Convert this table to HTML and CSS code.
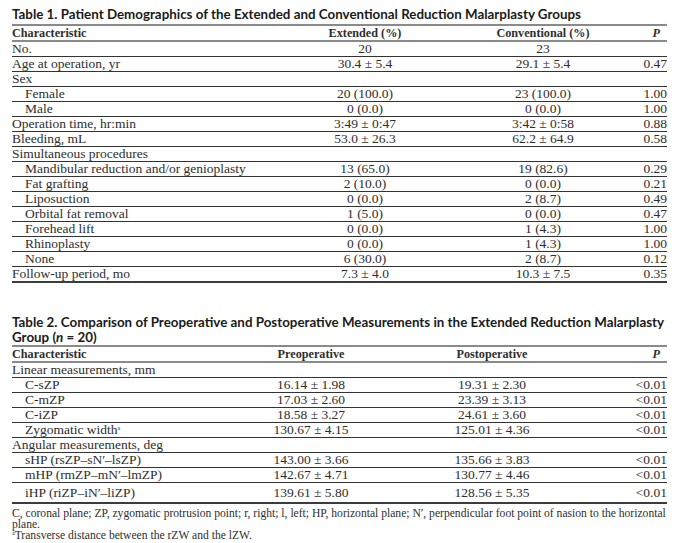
FILE: index.html
```html
<!DOCTYPE html>
<html lang="en">
<head>
<meta charset="utf-8">
<title>Malarplasty Tables</title>
<link rel="stylesheet" href="styles.css">
</head>
<body>
<div class="page">
  <h2 class="caption">Table 1. Patient Demographics of the Extended and Conventional Reduction Malarplasty Groups</h2>
  <table class="data t1">
    <colgroup><col class="c1"><col class="c2"><col class="c3"><col class="c4"></colgroup>
    <thead>
      <tr><th class="lbl">Characteristic</th><th>Extended (%)</th><th>Conventional (%)</th><th class="p"><i>P</i></th></tr>
    </thead>
    <tbody>
      <tr><td class="lbl">No.</td><td>20</td><td>23</td><td class="p"></td></tr>
      <tr><td class="lbl">Age at operation, yr</td><td>30.4 ± 5.4</td><td>29.1 ± 5.4</td><td class="p">0.47</td></tr>
      <tr><td class="lbl">Sex</td><td></td><td></td><td class="p"></td></tr>
      <tr><td class="lbl sub">Female</td><td>20 (100.0)</td><td>23 (100.0)</td><td class="p">1.00</td></tr>
      <tr><td class="lbl sub">Male</td><td>0 (0.0)</td><td>0 (0.0)</td><td class="p">1.00</td></tr>
      <tr><td class="lbl">Operation time, hr:min</td><td>3:49 ± 0:47</td><td>3:42 ± 0:58</td><td class="p">0.88</td></tr>
      <tr><td class="lbl">Bleeding, mL</td><td>53.0 ± 26.3</td><td>62.2 ± 64.9</td><td class="p">0.58</td></tr>
      <tr><td class="lbl">Simultaneous procedures</td><td></td><td></td><td class="p"></td></tr>
      <tr><td class="lbl sub">Mandibular reduction and/or genioplasty</td><td>13 (65.0)</td><td>19 (82.6)</td><td class="p">0.29</td></tr>
      <tr><td class="lbl sub">Fat grafting</td><td>2 (10.0)</td><td>0 (0.0)</td><td class="p">0.21</td></tr>
      <tr><td class="lbl sub">Liposuction</td><td>0 (0.0)</td><td>2 (8.7)</td><td class="p">0.49</td></tr>
      <tr><td class="lbl sub">Orbital fat removal</td><td>1 (5.0)</td><td>0 (0.0)</td><td class="p">0.47</td></tr>
      <tr><td class="lbl sub">Forehead lift</td><td>0 (0.0)</td><td>1 (4.3)</td><td class="p">1.00</td></tr>
      <tr><td class="lbl sub">Rhinoplasty</td><td>0 (0.0)</td><td>1 (4.3)</td><td class="p">1.00</td></tr>
      <tr><td class="lbl sub">None</td><td>6 (30.0)</td><td>2 (8.7)</td><td class="p">0.12</td></tr>
      <tr class="last"><td class="lbl">Follow-up period, mo</td><td>7.3 ± 4.0</td><td>10.3 ± 7.5</td><td class="p">0.35</td></tr>
    </tbody>
  </table>

  <h2 class="caption second">Table 2. Comparison of Preoperative and Postoperative Measurements in the Extended Reduction Malarplasty<br>Group (<i>n</i> = 20)</h2>
  <table class="data t2">
    <colgroup><col class="d1"><col class="d2"><col class="d3"><col class="d4"></colgroup>
    <thead>
      <tr><th class="lbl">Characteristic</th><th>Preoperative</th><th>Postoperative</th><th class="p"><i>P</i></th></tr>
    </thead>
    <tbody>
      <tr><td class="lbl">Linear measurements, mm</td><td></td><td></td><td class="p"></td></tr>
      <tr><td class="lbl sub">C-sZP</td><td>16.14 ± 1.98</td><td>19.31 ± 2.30</td><td class="p">&lt;0.01</td></tr>
      <tr><td class="lbl sub">C-mZP</td><td>17.03 ± 2.60</td><td>23.39 ± 3.13</td><td class="p">&lt;0.01</td></tr>
      <tr><td class="lbl sub">C-iZP</td><td>18.58 ± 3.27</td><td>24.61 ± 3.60</td><td class="p">&lt;0.01</td></tr>
      <tr><td class="lbl sub">Zygomatic width<sup class="fn">a</sup></td><td>130.67 ± 4.15</td><td>125.01 ± 4.36</td><td class="p">&lt;0.01</td></tr>
      <tr><td class="lbl">Angular measurements, deg</td><td></td><td></td><td class="p"></td></tr>
      <tr><td class="lbl sub">sHP (rsZP–sN′–lsZP)</td><td>143.00 ± 3.66</td><td>135.66 ± 3.83</td><td class="p">&lt;0.01</td></tr>
      <tr><td class="lbl sub">mHP (rmZP–mN′–lmZP)</td><td>142.67 ± 4.71</td><td>130.77 ± 4.46</td><td class="p">&lt;0.01</td></tr>
      <tr class="last tall"><td class="lbl sub">iHP (riZP–iN′–liZP)</td><td>139.61 ± 5.80</td><td>128.56 ± 5.35</td><td class="p">&lt;0.01</td></tr>
    </tbody>
  </table>
  <div class="notes">
    <p>C, coronal plane; ZP, zygomatic protrusion point; r, right; l, left; HP, horizontal plane; N′, perpendicular foot point of nasion to the horizontal plane.</p>
    <p><sup class="fn">a</sup>Transverse distance between the rZW and the lZW.</p>
  </div>
</div>
</body>
</html>
```

FILE: styles.css
```css
html, body {
  margin: 0;
  padding: 0;
  background: #ffffff;
}

.page {
  width: 655px;
  padding: 6px 16px 0 12px;
  font-family: "Liberation Serif", "Times New Roman", serif;
  color: #2e2e2e;
}

.caption {
  margin: 0 0 2px 0;
  font-family: Lato, "Liberation Sans", sans-serif;
  font-weight: 700;
  font-size: 13.36px;
  line-height: 16px;
  color: #1a1a1a;
  white-space: nowrap;
}

.caption.second {
  margin-top: 32px;
  margin-bottom: 1px;
  line-height: 14.5px;
}

.data {
  width: 655px;
  table-layout: fixed;
  border-collapse: separate;
  border-spacing: 0;
  font-size: 13.5px;
}

.t1 .c1 { width: 273px; }
.t1 .c2 { width: 160px; }
.t1 .c3 { width: 196px; }
.t1 .c4 { width: 26px; }

.t2 .d1 { width: 219px; }
.t2 .d2 { width: 160px; }
.t2 .d3 { width: 202px; }
.t2 .d4 { width: 74px; }

.data th,
.data td {
  padding: 0;
  line-height: 14px;
  text-align: center;
  white-space: nowrap;
  overflow: visible;
}

.data th {
  font-weight: 700;
  font-size: 12.2px;
  border-top: 2px solid #8a8a8a;
  border-bottom: 2px solid #8a8a8a;
}

.data td {
  border-bottom: 1px solid #333333;
}

.data .lbl {
  text-align: left;
}

.data .sub {
  padding-left: 13px;
}

.data .p {
  text-align: right;
}

.data th.p {
  padding-right: 7px;
}

.data tr.last td {
  border-bottom: 2px solid #3c3c3c;
}

.data tr.tall td {
  padding-top: 3px;
  padding-bottom: 2px;
}

.data tr.tall td.sub {
  padding-left: 13px;
}

.fn {
  font-size: 6px;
  vertical-align: 4px;
  line-height: 0;
}

.notes {
  margin-top: 4px;
  font-size: 11.6px;
  line-height: 11px;
}

.notes p {
  margin: 0;
}
```
